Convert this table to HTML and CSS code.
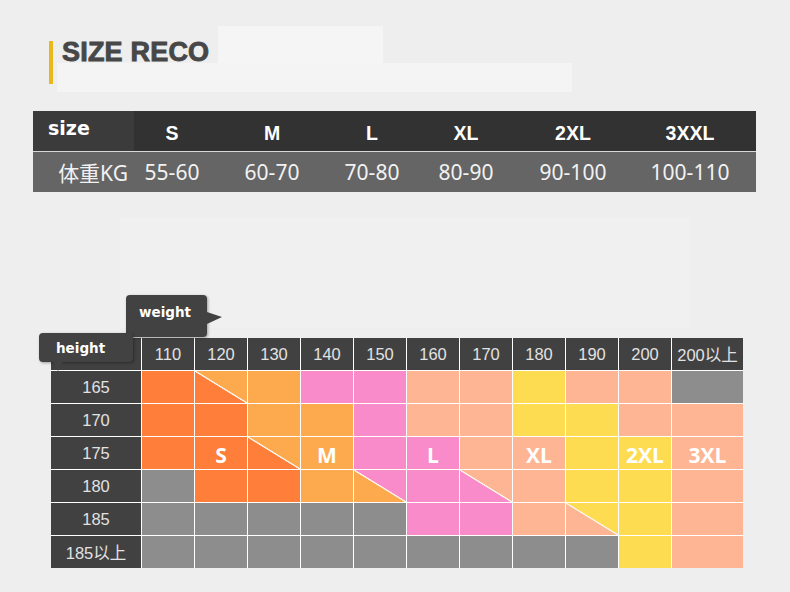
FILE: index.html
```html
<!DOCTYPE html>
<html lang="zh">
<head>
<meta charset="utf-8">
<title>Size Reco</title>
<link rel="stylesheet" href="styles.css">
</head>
<body>
<div class="page">
  <div class="hero">
    <span class="patch patch-a"></span>
    <span class="patch patch-b"></span>
    <h1 class="title">SIZE RECO</h1>
  </div>

  <div class="size-table">
    <div class="st-row st-head">
      <div class="st-cell st-first">size</div>
      <div class="st-cell">S</div>
      <div class="st-cell">M</div>
      <div class="st-cell">L</div>
      <div class="st-cell">XL</div>
      <div class="st-cell">2XL</div>
      <div class="st-cell">3XXL</div>
    </div>
    <div class="st-row st-body">
      <div class="st-cell st-first">体重KG</div>
      <div class="st-cell">55-60</div>
      <div class="st-cell">60-70</div>
      <div class="st-cell">70-80</div>
      <div class="st-cell">80-90</div>
      <div class="st-cell">90-100</div>
      <div class="st-cell">100-110</div>
    </div>
  </div>

  <div class="patch-c"></div>

  <div class="chart">
    <div class="bubble bubble-weight">weight</div>
    <div class="bubble bubble-height">height</div>
    <div class="grid">
      <div class="hd"></div>
      <div class="hd">110</div><div class="hd">120</div><div class="hd">130</div><div class="hd">140</div><div class="hd">150</div><div class="hd">160</div><div class="hd">170</div><div class="hd">180</div><div class="hd">190</div><div class="hd">200</div><div class="hd">200以上</div>

      <div class="lb">165</div>
      <div class="c o"></div><div class="c d-oa"></div><div class="c a"></div><div class="c p"></div><div class="c p"></div><div class="c k"></div><div class="c k"></div><div class="c y"></div><div class="c k"></div><div class="c k"></div><div class="c g"></div>

      <div class="lb">170</div>
      <div class="c o"></div><div class="c o"></div><div class="c a"></div><div class="c a"></div><div class="c p"></div><div class="c k"></div><div class="c k"></div><div class="c y"></div><div class="c y"></div><div class="c k"></div><div class="c k"></div>

      <div class="lb">175</div>
      <div class="c o"></div><div class="c o">S</div><div class="c d-oa"></div><div class="c a">M</div><div class="c p"></div><div class="c p">L</div><div class="c k"></div><div class="c k">XL</div><div class="c y"></div><div class="c y">2XL</div><div class="c k">3XL</div>

      <div class="lb">180</div>
      <div class="c g"></div><div class="c o"></div><div class="c o"></div><div class="c a"></div><div class="c d-ap"></div><div class="c p"></div><div class="c d-pk"></div><div class="c k"></div><div class="c y"></div><div class="c y"></div><div class="c k"></div>

      <div class="lb">185</div>
      <div class="c g"></div><div class="c g"></div><div class="c g"></div><div class="c g"></div><div class="c g"></div><div class="c p"></div><div class="c p"></div><div class="c k"></div><div class="c d-ky"></div><div class="c y"></div><div class="c k"></div>

      <div class="lb">185以上</div>
      <div class="c g"></div><div class="c g"></div><div class="c g"></div><div class="c g"></div><div class="c g"></div><div class="c g"></div><div class="c g"></div><div class="c g"></div><div class="c g"></div><div class="c y"></div><div class="c k"></div>
    </div>
  </div>
</div>
</body>
</html>
```

FILE: styles.css
```css
html, body {
  margin: 0;
  padding: 0;
  background: #eeeeee;
}

.page {
  width: 790px;
  height: 592px;
  overflow: hidden;
}

/* ---------- title ---------- */
.hero {
  position: relative;
  height: 111px;
  box-sizing: border-box;
  padding: 41px 0 0 49px;
}

.patch {
  position: absolute;
  background: #f5f5f5;
}
.patch-a {
  left: 218px;
  top: 26px;
  width: 165px;
  height: 37px;
}
.patch-b {
  left: 57px;
  top: 63px;
  width: 515px;
  height: 29px;
  background: #f4f4f4;
}

.title {
  position: relative;
  margin: 0;
  height: 43px;
  box-sizing: border-box;
  border-left: 4px solid #ebb81c;
  padding-left: 9px;
  font-family: "Liberation Sans", Arial, sans-serif;
  font-weight: 700;
  font-size: 27px;
  line-height: 23px;
  letter-spacing: 0.2px;
  color: #474747;
  -webkit-text-stroke: 0.9px #474747;
}

/* ---------- size table ---------- */
.size-table {
  margin-left: 33px;
  width: 723px;
}

.st-row {
  display: grid;
  grid-template-columns: 101px 76px 124px 76px 112px 102px 132px;
  align-items: center;
}

.st-head {
  height: 40px;
  background: #323232;
  border-bottom: 1px solid #d8d8d8;
  color: #ffffff;
  font-family: "Liberation Sans", Arial, sans-serif;
  font-weight: 700;
  font-size: 19.5px;
}
.st-head .st-cell {
  text-align: center;
  padding-top: 4px;
}
.st-head .st-first {
  align-self: stretch;
  background: #3b3b3b;
  text-align: left;
  padding: 6px 0 0 15px;
  font-family: "DejaVu Sans", sans-serif;
  font-size: 19px;
}

.st-body {
  height: 40px;
  background: #656565;
  color: #f2f2f2;
  font-family: "Noto Sans", "Noto Sans CJK SC", sans-serif;
  font-size: 21px;
}
.st-body .st-cell {
  text-align: center;
}
.st-body .st-first {
  text-align: right;
  padding-right: 6px;
}

/* faint patch behind the chart title area */
.patch-c {
  margin: 25px 0 0 120px;
  width: 570px;
  height: 111px;
  background: #f0f0f0;
}

/* ---------- chart ---------- */
.chart {
  position: relative;
  margin: 10px 0 0 51px;
  width: 692px;
}

.grid {
  display: grid;
  grid-template-columns: 90px repeat(10, 52px) 71px;
  grid-auto-rows: 32px;
  gap: 1px;
  background: #ffffff;
}

.hd, .lb {
  background: #414141;
  color: #e2e2e2;
  font-family: "Liberation Sans", "Noto Sans CJK SC", sans-serif;
  font-size: 16.5px;
  display: flex;
  align-items: center;
  justify-content: center;
}

.c {
  display: flex;
  align-items: center;
  justify-content: center;
  padding-top: 3px;
  box-sizing: border-box;
  color: #ffffff;
  font-family: "Open Sans", sans-serif;
  font-weight: 700;
  font-size: 21px;
}

.o { background: #fe7e3a; }
.a { background: #fdaa4e; }
.p { background: #f98bca; }
.k { background: #fdb593; }
.y { background: #fedc52; }
.g { background: #8d8d8d; }

.d-oa { background: linear-gradient(to top right, #fe7e3a calc(50% - 1px), #fff3e8 calc(50% - 0.4px), #fff3e8 calc(50% + 0.4px), #fdaa4e calc(50% + 1px)); }
.d-ap { background: linear-gradient(to top right, #fdaa4e calc(50% - 1px), #fff3e8 calc(50% - 0.4px), #fff3e8 calc(50% + 0.4px), #f98bca calc(50% + 1px)); }
.d-pk { background: linear-gradient(to top right, #f98bca calc(50% - 1px), #fff3e8 calc(50% - 0.4px), #fff3e8 calc(50% + 0.4px), #fdb593 calc(50% + 1px)); }
.d-ky { background: linear-gradient(to top right, #fdb593 calc(50% - 1px), #fff3e8 calc(50% - 0.4px), #fff3e8 calc(50% + 0.4px), #fedc52 calc(50% + 1px)); }

/* ---------- bubbles ---------- */
.bubble {
  position: absolute;
  z-index: 2;
  box-sizing: border-box;
  background: #424242;
  border-radius: 4px;
  box-shadow: 1px 1px 3px rgba(0, 0, 0, 0.35);
  color: #ffffff;
  font-family: "DejaVu Sans", sans-serif;
  font-weight: 700;
  font-size: 13.5px;
  line-height: 15px;
}

.bubble-weight {
  left: 75px;
  top: -43px;
  width: 81px;
  height: 42px;
  padding: 10px 0 0 13px;
}
.bubble-weight::after {
  content: "";
  position: absolute;
  left: 81px;
  top: 17px;
  border-left: 15px solid #424242;
  border-top: 5px solid transparent;
  border-bottom: 7px solid transparent;
}

.bubble-height {
  left: -12px;
  top: -5px;
  width: 94px;
  height: 29px;
  padding: 8px 0 0 17px;
}
.bubble-height::after {
  content: "";
  position: absolute;
  left: 14px;
  top: 29px;
  border-top: 9px solid #424242;
  border-left: 5px solid transparent;
  border-right: 5px solid transparent;
}
```
